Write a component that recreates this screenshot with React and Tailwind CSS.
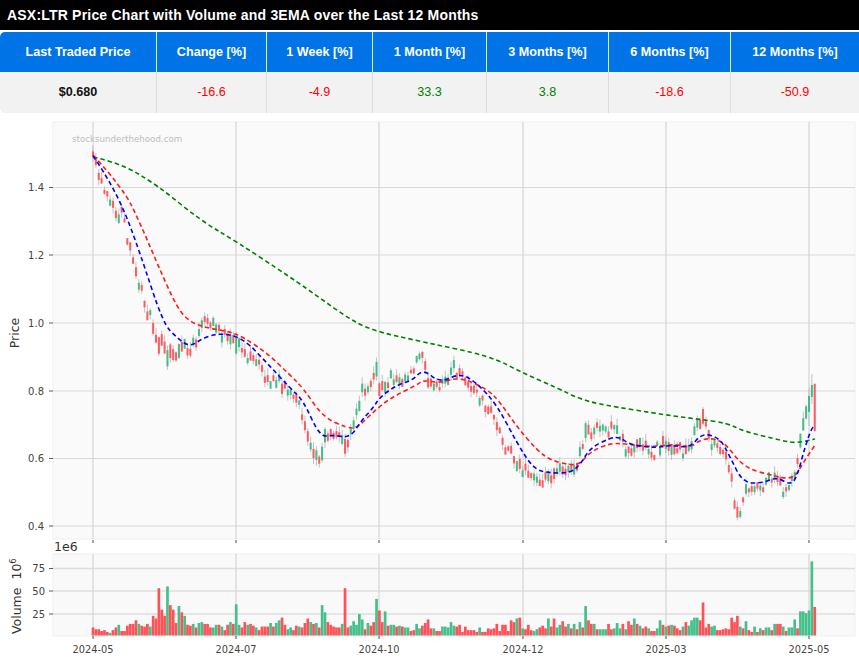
import React from "react";

const headers = ["Last Traded Price", "Change [%]", "1 Week [%]", "1 Month [%]", "3 Months [%]", "6 Months [%]", "12 Months [%]"];
const values = [
  { text: "$0.680", cls: "text-[#111] font-bold" },
  { text: "-16.6", cls: "text-[#ff0000]" },
  { text: "-4.9", cls: "text-[#ff0000]" },
  { text: "33.3", cls: "text-[#008000]" },
  { text: "3.8", cls: "text-[#008000]" },
  { text: "-18.6", cls: "text-[#ff0000]" },
  { text: "-50.9", cls: "text-[#ff0000]" },
];

// r = down day, g = up day, number = volume in millions
const volumes = `r9 r7 r7 r5 r6 r4 g3 r6 r9 g12 r5 r5 r11 r13 r13 r17 g13 r11 r10 r13 g10 r22 r19 r53 r29 r22 g55 r34 r29 r14 g33 r26 g22 r12 r11 g13 r9 g14 g15 r13 r13 r9 g9 g12 r12 g10 r6 r12 g15 r13
g35 g12 r9 r15 g12 r13 r11 g9 r6 r10 r10 r10 g14 r10 g14 g17 r20 r12 g7 g9 r6 r11 g10 r9 r14 r19 g15 r13 g14 r9 g34 g26 r15 r12 r10 r9 r9 g13 r53 r9 g11 g16 g12 g24 g18 r7 g14 r11 r15 g41
r28 r15 g27 r11 g12 g12 r10 g11 r10 g9 g9 r5 r6 g13 g8 r11 r14 r18 r8 g8 r5 r5 g10 g10 g9 g15 g11 r10 r12 r4 r10 r6 r6 r6 r4 g9 r4 r4 r8 r7 r8 r13 r5 r12 r12 r5 r17 r15 g19 r20
g8 r7 r12 r6 g5 g7 r9 r11 r8 g19 r10 r19 g9 g12 r16 r10 g13 r8 g13 r7 g15 r9 g33 r17 r13 g13 r7 g7 g7 g7 r13 r7 g8 g14 g8 r13 g7 r16 r12 g19 r13 g11 r8 r10 g8 r5 r5 g8 g17 r12
g10 r11 g12 r11 r8 r6 g10 r15 g11 g17 g20 g20 r17 r37 r9 r13 g10 g11 r6 r6 r7 r8 r7 r20 r15 r22 g10 r8 g16 r6 r4 g10 r4 g8 r6 g9 g9 r6 g13 r13 r13 g10 r5 g9 g9 g18 r8 g27 g27 g25
g28 g83 r32`
  .trim()
  .split(/\s+/)
  .map((s) => ({ up: s[0] === "g", v: Number(s.slice(1)) }));

const closePath = [
  [93, 160], [97, 170], [103, 190], [107, 198], [117, 217], [122, 213], [128, 243], [133, 263], [140, 287], [145, 303], [150, 317],
  [158, 338], [167, 357], [175, 355], [182, 347], [190, 353], [200, 333], [204, 323], [217, 328], [230, 343], [240, 343], [248, 360],
  [263, 367], [267, 382], [283, 383], [290, 395], [300, 407], [308, 433], [315, 453], [319, 462], [325, 438], [330, 430], [340, 438],
  [348, 445], [355, 423], [360, 398], [365, 388], [377, 373], [380, 393], [390, 378], [407, 377], [418, 358], [423, 350], [430, 387],
  [440, 390], [453, 368], [467, 383], [477, 395], [487, 407], [497, 423], [503, 443], [513, 453], [522, 470], [533, 478], [547, 478],
  [560, 465], [573, 473], [580, 457], [587, 427], [593, 433], [603, 428], [620, 433], [628, 453], [640, 442], [653, 453], [667, 442],
  [683, 453], [695, 435], [703, 415], [713, 447], [725, 453], [732, 483], [735, 502], [738, 513], [742, 505], [747, 485], [763, 485],
  [775, 473], [783, 490], [792, 482], [800, 447], [807, 402], [813, 390], [815, 408],
];

const greenLine = [[93, 157], [120, 163], [157, 185], [200, 220], [237, 242], [290, 277], [320, 298], [345, 316], [370, 330], [423, 342], [490, 356], [523, 373], [557, 388], [580, 399], [603, 405], [666, 415], [697, 419], [727, 423], [743, 431], [783, 441], [797, 443], [815, 439]];
const redLine = [[93, 155], [123, 188], [140, 223], [157, 263], [177, 308], [190, 322], [207, 328], [227, 331], [243, 337], [267, 353], [290, 375], [303, 388], [323, 417], [347, 428], [357, 428], [370, 415], [390, 398], [417, 385], [423, 380], [440, 383], [460, 377], [487, 389], [500, 402], [517, 427], [537, 450], [550, 460], [570, 465], [580, 464], [590, 452], [610, 443], [627, 444], [650, 447], [677, 444], [690, 448], [703, 438], [723, 440], [743, 467], [770, 475], [793, 480], [803, 463], [815, 445]];
const blueLine = [[93, 156], [103, 170], [123, 207], [140, 253], [163, 323], [177, 338], [190, 347], [203, 338], [220, 333], [243, 338], [267, 363], [290, 388], [303, 400], [320, 437], [333, 435], [350, 438], [362, 420], [373, 408], [380, 397], [397, 385], [413, 380], [423, 369], [440, 383], [460, 373], [477, 383], [497, 405], [517, 443], [533, 468], [547, 473], [570, 473], [580, 465], [590, 448], [610, 438], [620, 437], [630, 445], [657, 448], [670, 445], [690, 448], [702, 433], [720, 438], [730, 457], [743, 483], [763, 483], [777, 477], [790, 485], [797, 477], [805, 447], [812, 427], [815, 427]];

const STEP = 2.864;
const xAt = (i) => 93 + i * STEP;

function smooth(pts) {
  let d = `M${pts[0][0]} ${pts[0][1]}`;
  for (let i = 1; i < pts.length - 1; i++) {
    const mx = (pts[i][0] + pts[i + 1][0]) / 2;
    const my = (pts[i][1] + pts[i + 1][1]) / 2;
    d += ` Q${pts[i][0]} ${pts[i][1]} ${mx} ${my}`;
  }
  const last = pts[pts.length - 1];
  return d + ` L${last[0]} ${last[1]}`;
}

function lerpPath(x) {
  for (let i = 1; i < closePath.length; i++) {
    if (x <= closePath[i][0]) {
      const [x0, y0] = closePath[i - 1];
      const [x1, y1] = closePath[i];
      return y0 + ((y1 - y0) * (x - x0)) / (x1 - x0);
    }
  }
  return closePath[closePath.length - 1][1];
}

let seed = 17;
const rnd = () => {
  seed = (seed * 16807) % 2147483647;
  return seed / 2147483647;
};

const candles = volumes.map(({ up, v }, i) => {
  const x = xAt(i);
  const mid = lerpPath(x) + (rnd() - 0.5) * 12;
  const h = 1.5 + rnd() * 4 + Math.min(v, 40) * 0.3;
  return { x, up, top: mid - h / 2, bottom: mid + h / 2, hi: mid - h / 2 - rnd() * 7, lo: mid + h / 2 + rnd() * 6 };
});
// the last sessions are big moves, set them by hand
candles[250] = { x: xAt(250), up: true, top: 396, bottom: 412, hi: 388, lo: 426 };
candles[251] = { x: xAt(251), up: true, top: 385, bottom: 397, hi: 374, lo: 404 };
candles[252] = { x: xAt(252), up: false, top: 384, bottom: 431, hi: 383, lo: 432 };

const xTicks = [
  [93, "2024-05"],
  [236, "2024-07"],
  [379, "2024-10"],
  [523, "2024-12"],
  [666, "2025-03"],
  [809, "2025-05"],
];
const priceTicks = [
  [187.5, "1.4"],
  [255, "1.2"],
  [323, "1.0"],
  [391, "0.8"],
  [458.5, "0.6"],
  [526, "0.4"],
];
const volTicks = [
  [568.5, "75"],
  [591, "50"],
  [614, "25"],
];
const axisFont = { fontFamily: "'DejaVu Sans', sans-serif" };

function Chart() {
  return (
    <svg viewBox="0 113 859 548" className="block w-[859px] h-[548px]" style={axisFont}>
      <rect x="53" y="122" width="802" height="417" fill="#fafafa" stroke="#f0f0f0" />
      <rect x="53" y="554" width="802" height="82" fill="#f9f9f9" stroke="#f0f0f0" />

      {priceTicks.map(([y, label]) => (
        <g key={label}>
          <line x1="53" x2="855" y1={y} y2={y} stroke="#d8d8d8" strokeWidth="1.2" />
          <line x1="49" x2="53" y1={y} y2={y} stroke="#333" strokeWidth="0.8" />
          <text x="44" y={y + 3.5} fontSize="10" textAnchor="end" fill="#444">{label}</text>
        </g>
      ))}
      {volTicks.map(([y, label]) => (
        <g key={label}>
          <line x1="53" x2="855" y1={y} y2={y} stroke="#dedede" strokeWidth="1.4" />
          <line x1="49" x2="53" y1={y} y2={y} stroke="#333" strokeWidth="0.8" />
          <text x="45" y={y + 3.5} fontSize="10" textAnchor="end" fill="#444">{label}</text>
        </g>
      ))}
      {xTicks.map(([x, label]) => (
        <g key={label}>
          <line x1={x} x2={x} y1="122" y2="539" stroke="#d4d4d4" strokeWidth="1.2" />
          <line x1={x} x2={x} y1="554" y2="636" stroke="#d4d4d4" strokeWidth="1.2" />
          <line x1={x} x2={x} y1="540" y2="543" stroke="#333" strokeWidth="0.9" />
          <line x1={x} x2={x} y1="636" y2="639" stroke="#333" strokeWidth="0.9" />
          <text x={x} y="653" fontSize="9.8" textAnchor="middle" fill="#444">{label}</text>
        </g>
      ))}

      <text x="72" y="142" fontSize="8.7" fill="#bdbdbd">stocksunderthehood.com</text>

      {candles.map((c, i) => (
        <g key={i}>
          <line x1={c.x} x2={c.x} y1={c.hi} y2={c.lo} stroke="#b4b4b4" strokeWidth="0.8" />
          <rect x={c.x - 1} y={c.top} width="2" height={c.bottom - c.top} fill={c.up ? "#3fbf86" : "#ff5a5f"} />
        </g>
      ))}

      <path d={smooth(greenLine)} fill="none" stroke="#008000" strokeWidth="1.6" strokeDasharray="4.5 3" />
      <path d={smooth(redLine)} fill="none" stroke="#ff1a1a" strokeWidth="1.6" strokeDasharray="4.5 3" />
      <path d={smooth(blueLine)} fill="none" stroke="#0000ff" strokeWidth="1.6" strokeDasharray="4.5 3" />

      {volumes.map(({ up, v }, i) => (
        <rect key={i} x={xAt(i) - 1.35} y={635.5 - v * 0.893} width="2.7" height={v * 0.893} fill={up ? "#45c08a" : "#ff5258"} />
      ))}

      <text x="54" y="551" fontSize="12.5" fill="#333">1e6</text>
      <text transform="translate(19 333) rotate(-90)" fontSize="12.5" textAnchor="middle" fill="#333">Price</text>
      <text transform="translate(21 634) rotate(-90)" fontSize="12.5" fill="#333" xmlSpace="preserve">
        Volume{"  "}10<tspan fontSize="8.5" dy="-5">6</tspan>
      </text>
    </svg>
  );
}

export default function App() {
  return (
    <div className="w-[859px] h-[661px] overflow-hidden bg-white font-['Liberation_Sans',Arial,sans-serif]">
      <div className="h-[30px] bg-black pl-[7px] flex items-center text-white font-bold text-[14px] tracking-[0.2px]">
        ASX:LTR Price Chart with Volume and 3EMA over the Last 12 Months
      </div>
      <div className="mt-[2px] rounded-l-[5px] overflow-hidden grid grid-cols-[157px_110px_106px_114px_122px_122px_1fr] grid-rows-[40px_41px] text-[12.6px]">
        {headers.map((h, i) => (
          <div key={h} className={`bg-[#0073e6] text-white font-bold flex items-center justify-center ${i < 6 ? "border-r border-[#dbe9f8]" : ""}`}>
            {h}
          </div>
        ))}
        {values.map((v, i) => (
          <div key={i} className={`bg-[#f2f2f2] flex items-center justify-center ${v.cls} ${i < 6 ? "border-r border-[#dcdcdc]" : ""}`}>
            {v.text}
          </div>
        ))}
      </div>
      <Chart />
    </div>
  );
}
